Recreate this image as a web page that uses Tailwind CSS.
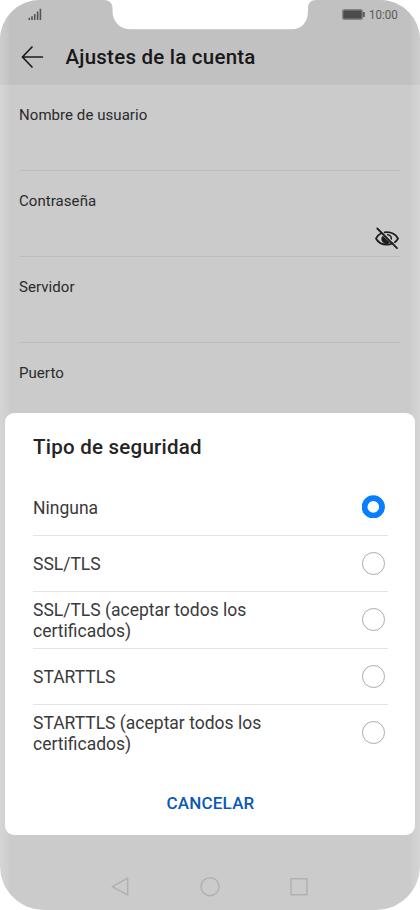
<!DOCTYPE html>
<html lang="es">
<head>
<meta charset="utf-8">
<title>Ajustes de la cuenta</title>
<script src="https://cdn.jsdelivr.net/npm/@tailwindcss/browser@4"></script>
</head>
<body class="bg-white font-[Roboto,sans-serif]">
<div class="relative flex h-[910px] w-[420px] flex-col overflow-hidden rounded-t-[40px] rounded-b-[44px] bg-[#cbcbcb]">
  <header class="h-[85px] shrink-0 bg-[#c1c1c1]">
    <div class="flex h-[30px] items-center justify-between pr-[22px] pl-7">
      <svg class="-mt-[3px] h-3 w-[14px]" viewBox="0 0 14 12" fill="#555"><path d="M.5 9.8h1.6V12H.5zM3.2 8.300h1.600V12H3.200zM5.900 6h1.600v6H5.900zM8.800 3.500h1.600V12H8.800zM11.600 .7h1.600V12h-1.600z"/></svg>
      <div class="flex items-center gap-1">
        <svg class="-mt-px h-[11px] w-[23px]" viewBox="0 0 23 11"><rect x=".7" y=".7" width="19.600" height="9.600" rx="1.500" fill="#4b4b4b" stroke="#858585" stroke-width="1.400"/><path d="M21 3h1.700v5H21z" fill="#555"/></svg>
        <span class="-mt-[2px] w-[29px] text-[13px] leading-none whitespace-nowrap text-[#5a5a5a]"><span class="inline-block origin-left scale-x-[.89]">10:00</span></span>
      </div>
    </div>
    <div class="flex h-[55px] items-center pl-[21px]">
      <svg class="-mt-px h-6 w-[23px]" viewBox="0 0 23 24" fill="none" stroke="#1c1c1c" stroke-width="1.700" stroke-linecap="round" stroke-linejoin="round"><path d="M11 2 1.400 12 11 22M1.400 12h20"/></svg>
      <h1 class="ml-[21.5px] text-[20.5px] font-medium tracking-[.23px] text-[#181818]">Ajustes de la cuenta</h1>
    </div>
  </header>
  <main class="flex flex-col pr-5 pl-[19px] text-[15px] leading-5 tracking-[.06px] text-[#2a2a2a]">
    <div class="h-[86px] border-b border-[#bdbdbd] pt-5">Nombre de usuario</div>
    <div class="flex h-[86px] justify-between border-b border-[#bdbdbd] pt-5">
      <span>Contraseña</span>
      <svg class="mt-[36px] h-[23px] w-[26px]" viewBox="0 0 26 23" fill="none" stroke="#1d1d1d" stroke-width="1.800" stroke-linecap="round"><path d="M7.200 6.200C4.800 7.300 3 9.300 2 11.500c2 3.800 6 6.100 10.700 6.100 2.200 0 4.200-.5 5.900-1.400M10.600 5.400c.7-.1 1.400-.2 2.100-.2 5 0 9.100 2.300 11.300 6.300-.8 1.500-1.800 2.700-3.100 3.700"/><path d="M8.700 8.700a5 5 0 0 0 7.200 6.900z" fill="#1d1d1d" stroke="none"/><path d="M13.600 7.700a4.300 4.300 0 0 1 3.800 4.200" stroke-width="1.500"/><path d="M3.300 1.500 23 21.200"/></svg>
    </div>
    <div class="h-[86px] border-b border-[#bdbdbd] pt-5">Servidor</div>
    <div class="pt-5">Puerto</div>
  </main>
  <footer class="mt-auto mr-[2px] flex h-[35px] items-start justify-center gap-[69px] text-[#b1b1b1]">
    <svg class="h-[22px] w-5" viewBox="0 0 20 22" fill="none" stroke="currentColor" stroke-width="1.500" stroke-linejoin="round"><path d="M18.700 3.200v17L3.200 11.700z"/></svg>
    <svg class="h-[22px] w-[22px]" viewBox="0 0 22 22" fill="none" stroke="currentColor" stroke-width="1.500"><circle cx="12" cy="11.700" r="9"/></svg>
    <svg class="h-[22px] w-5" viewBox="0 0 20 22" fill="none" stroke="currentColor" stroke-width="1.500" stroke-linejoin="round"><rect x="2" y="3.700" width="16" height="16"/></svg>
  </footer>

  <div class="absolute inset-y-0 left-0 w-[9px] bg-linear-to-r from-white/20 to-white/5"></div>
  <div class="absolute inset-y-0 right-0 w-[9px] bg-linear-to-l from-white/20 to-white/5"></div>
  <svg class="absolute top-0 left-[104px] h-[30px] w-[212px]" viewBox="0 0 212 30" fill="white"><path d="M0 0h212c-5 0-8 3-8 8v3c0 12-7 18.300-17 18.300H27C16 29.300 8.500 22 8.500 11V8C8.500 3 5 0 0 0z"/></svg>

  <section class="absolute top-[413px] left-[5px] flex h-[422px] w-[410px] flex-col rounded-[9px] bg-white pr-[27px] pl-7 text-[#3a3a3a]">
    <h2 class="h-[66px] shrink-0 pt-[21px] text-[20.5px] leading-[27px] font-medium tracking-[.24px] text-[#242424]">Tipo de seguridad</h2>
    <ul class="flex flex-col divide-y divide-[#e4e4e4] text-[17.5px] leading-[21px]">
      <li class="flex h-[56.5px] items-center justify-between pr-[3px]"><span class="pt-[3px]">Ninguna</span><svg class="size-[23px]" viewBox="0 0 23 23" fill="none" stroke="#087dff" stroke-width="5.800"><circle cx="11.300" cy="11.900" r="8.700"/></svg></li>
      <li class="flex h-[56.5px] items-center justify-between pr-[3px]"><span class="pt-[2px]">SSL/TLS</span><span class="size-[23px] rounded-full border border-[#aaa]"></span></li>
      <li class="flex h-[56.5px] items-center justify-between pr-[3px]"><span class="pt-[2px]">SSL/TLS (aceptar todos los<br>certificados)</span><span class="size-[23px] rounded-full border border-[#aaa]"></span></li>
      <li class="flex h-[56.5px] items-center justify-between pr-[3px]"><span class="pt-[2px]">STARTTLS</span><span class="size-[23px] rounded-full border border-[#aaa]"></span></li>
      <li class="flex h-[56.5px] items-center justify-between pr-[3px]"><span class="pt-[2px]">STARTTLS (aceptar todos los<br>certificados)</span><span class="-mt-px size-[23px] rounded-full border border-[#aaa]"></span></li>
    </ul>
    <button class="mt-[29px] text-[17px] leading-6 font-medium tracking-[.2px] text-[#0a59b8]">CANCELAR</button>
  </section>
</div>
</body>
</html>
